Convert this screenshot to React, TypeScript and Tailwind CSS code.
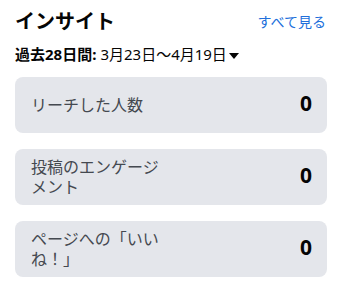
import React from "react";

const jp = { fontFamily: '"Noto Sans", "Noto Sans CJK JP", sans-serif' };

function Card({ label, value }: { label: string; value: string }) {
  return (
    <div className="flex h-14 items-center justify-between rounded-lg bg-[#e4e6eb] pl-4 pr-[15px]">
      <div className="w-[136px] text-[16px] leading-5 text-[#444950]">{label}</div>
      <div className="-mt-1 text-[21px] font-bold leading-6 text-[#050505]">{value}</div>
    </div>
  );
}

export default function App() {
  return (
    <div className="w-[340px] h-[294px] bg-white pl-[15px] pr-[13px] pt-[9px]" style={jp}>
      <div className="flex items-center justify-between">
        <div className="text-[20px] font-bold leading-[26px] text-[#050505]">インサイト</div>
        <a className="mr-[1px] text-[14px] leading-5 text-[#216fdb]">すべて見る</a>
      </div>
      <div className="mt-[9px] flex items-center text-[15px] leading-5 text-[#050505]">
        <span className="font-bold">過去28日間:</span>
        <span className="ml-1">3月23日〜4月19日</span>
        <svg width="10" height="6" viewBox="0 0 10 6" className="ml-[2px] mt-[3px]">
          <path d="M0 0 L10 0 L5 6 Z" fill="#050505" />
        </svg>
      </div>
      <div className="mt-[13px] flex flex-col gap-4">
        <Card label="リーチした人数" value="0" />
        <Card label="投稿のエンゲージメント" value="0" />
        <Card label="ページへの「いいね！」" value="0" />
      </div>
    </div>
  );
}
